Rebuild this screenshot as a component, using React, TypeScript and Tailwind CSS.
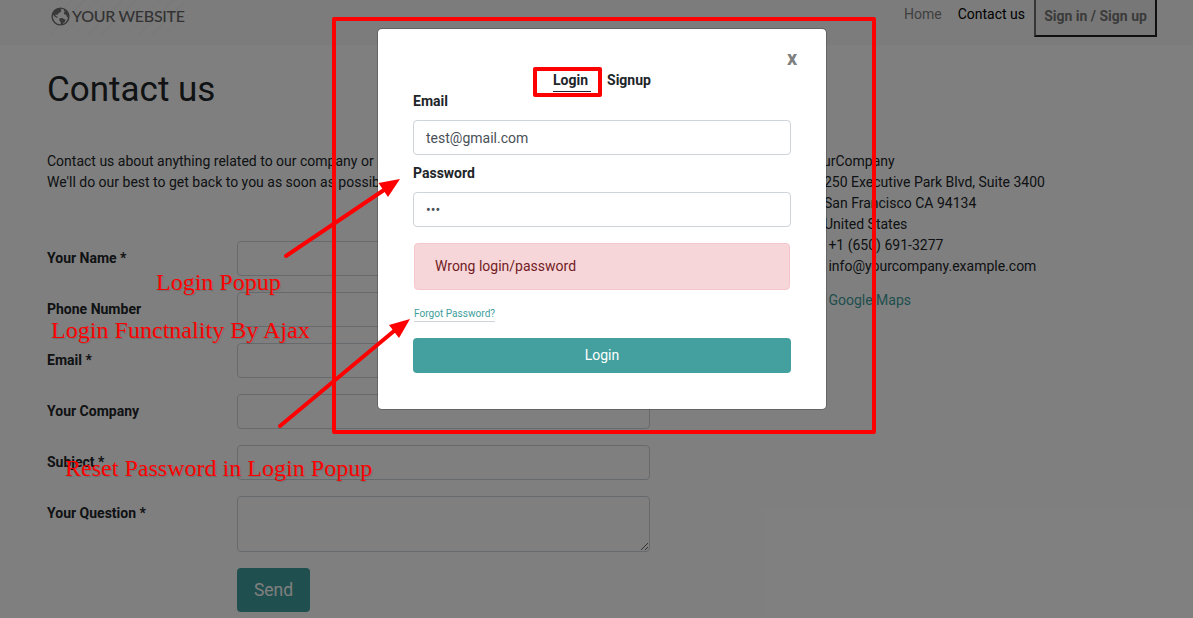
import React from "react";

const fields = ["Your Name *", "Phone Number", "Email *", "Your Company", "Subject *"];

function Globe() {
  return (
    <svg className="h-[19px] w-[19px] shrink-0" viewBox="0 0 19 19">
      <circle cx="9.5" cy="9.5" r="8.4" fill="none" stroke="#707070" strokeWidth="1.4" />
      <path
        fill="#707070"
        d="M2 6 4.500 2.500 8 1.200l2.500.5L9.700 3.200l.8 1-1.500 1.200-1.200.3-.6 1.500-1.500.6-1.300-.2.3 1.400 1.500.4.7 1.200-1.200.1L3.600 9.500 2.200 8zM8.500 11.300l2.700-.3 2.200 1.300 1.300.5-1 2.200-1.200.7-.8 1.700-1.600.5-.5-3-1.300-1.500zM13.200 2.500l2.800 2.300 1.500 3.400-.3 2.500-1.500-1.200-.4-1.700-1.700-.4-1-1.500 1.300-1.500-1.200-.6z"
      />
    </svg>
  );
}

function Header() {
  return (
    <header className="flex h-[45px] items-start justify-between bg-[#f8f8f8] pl-[47px] pr-9">
      <div className="flex h-[35px] w-[138px] items-center bg-[repeating-linear-gradient(135deg,transparent_0_8px,#f2f2f2_8px_9px)] pb-[2px] pl-1 text-[#666]">
        <Globe />
        <span className="-mt-[2px] ml-[2px] whitespace-nowrap font-[Lato] text-[16px] font-medium leading-5 tracking-[-0.3px]">YOUR WEBSITE</span>
      </div>
      <nav className="flex">
        <a className="mr-[16px] pt-1 leading-[21px] text-[#808080]">Home</a>
        <a className="mr-[9px] pt-1 leading-[21px] text-black">Contact us</a>
        <button className="h-[37px] w-[123px] border-2 border-t-0 border-b-[#202020] border-l-[#6d6d6d] border-r-[#202020] bg-[#efefef] pb-[2px] font-bold text-[#767676]">
          Sign in / Sign up
        </button>
      </nav>
    </header>
  );
}

function Contact() {
  return (
    <main className="px-[47px] pt-6">
      <h1 className="text-[35px] leading-[42px]">Contact us</h1>
      <div className="mt-[40px] flex">
        <section className="w-[761px]">
          <p>Contact us about anything related to our company or services.</p>
          <p>We'll do our best to get back to you as soon as possible.</p>
          <form className="mt-12 flex w-[603px] flex-col gap-4">
            {fields.map((f) => (
              <div key={f} className="flex h-[35px]">
                <label className="w-[190px] pt-[7px] font-bold">{f}</label>
                <input className="flex-1 rounded border border-[#ced4da] bg-white" />
              </div>
            ))}
            <div className="flex h-[56px]">
              <label className="w-[190px] pt-[7px] font-bold">Your Question *</label>
              <textarea className="flex-1 resize rounded border border-[#ced4da] bg-white" />
            </div>
            <button type="button" className="ml-[190px] h-[44px] w-[73px] rounded bg-[#3e9e9c] text-[17.5px] text-white">
              Send
            </button>
          </form>
        </section>
        <address className="whitespace-nowrap not-italic">
          <div className="-ml-px">YourCompany</div>
          <div className="pl-[16px]">250 Executive Park Blvd, Suite 3400</div>
          <div className="pl-[16px]">San Francisco CA 94134</div>
          <div className="pl-[16px]">United States</div>
          <div className="pl-[20.4px]">+1 (650) 691-3277</div>
          <div className="pl-[20.4px]">info@yourcompany.example.com</div>
          <div className="mt-[13px] pl-[20.4px] text-[#3e9e9c]">Google Maps</div>
        </address>
      </div>
    </main>
  );
}

function LoginDialog() {
  return (
    <div className="absolute left-[377px] top-[28px] flex h-[382px] w-[450px] flex-col rounded-[5px] border border-black/20 bg-white bg-clip-padding px-[35px]">
      <button className="mr-[-11px] mt-[18px] h-6 w-[20px] self-end pb-[2px] text-[20px] font-bold leading-[22px] text-[#808080]">x</button>
      <div className="-mt-[1px] flex h-[22px] justify-center font-bold leading-[21px]">
        <span className="h-[22px] w-[38px] border-b border-[#212529]">Login</span>
        <span className="ml-[16px]">Signup</span>
      </div>
      <label className="-mt-[1px] font-bold">Email</label>
      <input className="mt-[8px] h-[35px] rounded border border-[#ced4da] px-3 text-[#495057]" defaultValue="test@gmail.com" />
      <label className="mt-[8px] font-bold">Password</label>
      <input type="password" className="mt-[8px] h-[35px] rounded border border-[#ced4da] px-3 text-[#495057]" defaultValue="abc" />
      <div className="mx-px mt-4 h-[47px] rounded border border-[#f5c6cb] bg-[#f6d6d9] px-[20px] pt-[12px] text-[#721c24]">Wrong login/password</div>
      <a className="ml-px mt-[15px] h-[17px] self-start border-b border-[#ced4da] text-[10.1px] leading-[17px] text-[#3e9e9c]">Forgot Password?</a>
      <button className="mt-4 h-[35px] rounded bg-[#43a09e] text-white">Login</button>
    </div>
  );
}

function Annotations() {
  const note = "absolute whitespace-nowrap font-['Liberation_Serif'] text-[24px] leading-7 text-[#ff0000] [text-shadow:1px_1px_1px_rgba(0,0,0,0.15)]";
  return (
    <>
      <div className="absolute left-[332px] top-[17px] h-[417px] w-[544px] rounded-[2px] border-4 border-[#ff0000]" />
      <div className="absolute left-[533px] top-[67px] h-[30px] w-[69px] rounded-[2px] border-4 border-[#ff0000]" />
      <svg className="absolute inset-0 h-[618px] w-[1193px]" viewBox="0 0 1193 618">
        <g stroke="#ff0000" strokeWidth="4" strokeLinecap="round" fill="#ff0000">
          <path d="M286 256 384 190" />
          <path stroke="none" d="M400 179 388 197 378.500 183z" />
          <path d="M280 426 394 331" />
          <path stroke="none" d="M410 319 399 338 389 325z" />
        </g>
      </svg>
      <div className={note + " left-[156px] top-[268px]"}>Login Popup</div>
      <div className={note + " left-[51px] top-[316px] tracking-[0.03px]"}>Login Functnality By Ajax</div>
      <div className={note + " left-[65px] top-[454px] tracking-[0.02px]"}>Reset Password in Login Popup</div>
    </>
  );
}

export default function App() {
  return (
    <div className="relative h-[618px] w-[1193px] overflow-hidden bg-white font-[Roboto,sans-serif] text-[14px] leading-[21px] text-[#212529]">
      <Header />
      <Contact />
      <div className="absolute inset-0 bg-black/50" />
      <LoginDialog />
      <Annotations />
    </div>
  );
}
